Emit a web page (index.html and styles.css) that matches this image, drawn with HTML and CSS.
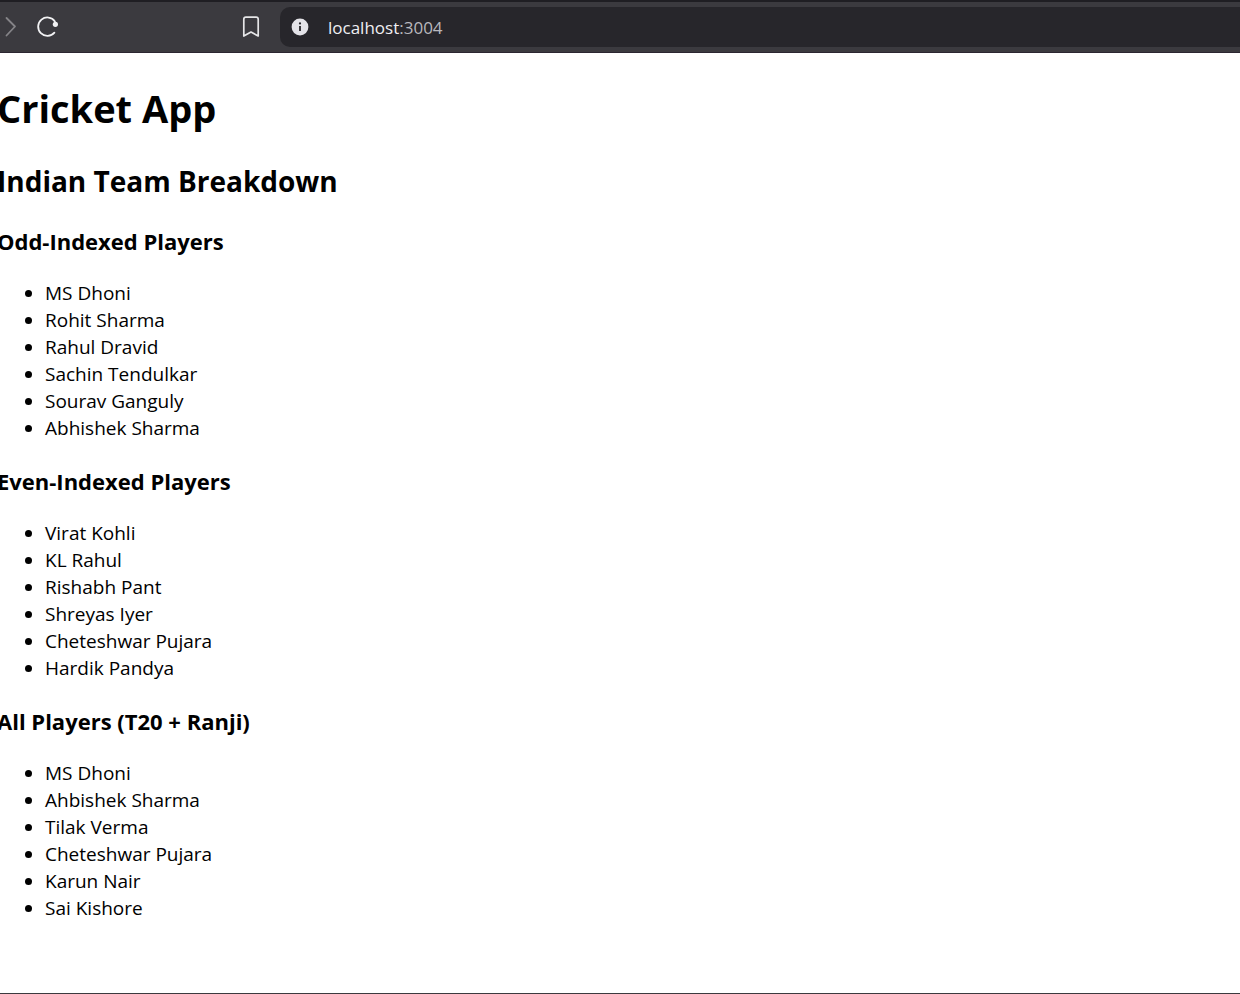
FILE: index.html
```
<!DOCTYPE html>
<html lang="en">
<head>
<meta charset="utf-8">
<title>Cricket App</title>
<link rel="stylesheet" href="styles.css">
</head>
<body>
<header class="toolbar">
  <button class="icon-button forward" type="button" aria-label="Forward">
    <svg width="12" height="22" viewBox="0 0 12 22" fill="none" stroke="#858488" stroke-width="1.8" stroke-linecap="round" stroke-linejoin="round"><path d="M1.5 2 10 10.5 1.5 19.5"/></svg>
  </button>
  <button class="icon-button reload" type="button" aria-label="Reload">
    <svg width="24" height="24" viewBox="0 0 24 24" fill="none" stroke="#f2f2f4" stroke-width="1.8" stroke-linecap="round"><path d="M18.9 6.4A9.2 9.2 0 1 0 18.4 17.6"/><circle cx="19.4" cy="9.3" r="2.6" fill="#f2f2f4" stroke="none"/></svg>
  </button>
  <button class="icon-button bookmark" type="button" aria-label="Bookmark">
    <svg width="18" height="22" viewBox="0 0 18 22" fill="none" stroke="#e6e6e8" stroke-width="1.7" stroke-linejoin="round"><path d="M1.8 20V3.3Q1.8 1.2 3.9 1.2H14.1Q16.2 1.2 16.2 3.3V20L9 16Z"/></svg>
  </button>
  <div class="address">
    <button class="icon-button" type="button" aria-label="Site information">
      <svg width="18" height="18" viewBox="0 0 18 18"><circle cx="9" cy="9" r="8.4" fill="#e4e3e8"/><path d="M9 8V13" stroke="#27262b" stroke-width="1.8"/><circle cx="9" cy="5.4" r="1.1" fill="#27262b"/></svg>
    </button>
    <a class="url" href="#"><span class="host">localhost</span>:3004</a>
  </div>
</header>
<main class="page">
  <h1>Cricket App</h1>
  <h2>Indian Team Breakdown</h2>
  <h3>Odd-Indexed Players</h3>
  <ul>
    <li>MS Dhoni</li>
    <li>Rohit Sharma</li>
    <li>Rahul Dravid</li>
    <li>Sachin Tendulkar</li>
    <li>Sourav Ganguly</li>
    <li>Abhishek Sharma</li>
  </ul>
  <h3>Even-Indexed Players</h3>
  <ul>
    <li>Virat Kohli</li>
    <li>KL Rahul</li>
    <li>Rishabh Pant</li>
    <li>Shreyas Iyer</li>
    <li>Cheteshwar Pujara</li>
    <li>Hardik Pandya</li>
  </ul>
  <h3>All Players (T20 + Ranji)</h3>
  <ul>
    <li>MS Dhoni</li>
    <li>Ahbishek Sharma</li>
    <li>Tilak Verma</li>
    <li>Cheteshwar Pujara</li>
    <li>Karun Nair</li>
    <li>Sai Kishore</li>
  </ul>
</main>
</body>
</html>
```
FILE: styles.css
```
* {
  box-sizing: border-box;
}

body {
  margin: 0;
  min-height: 100vh;
  display: flex;
  flex-direction: column;
  overflow-x: hidden;
  border-bottom: 1px solid #3b3a3f;
  background: #fff;
  color: #000;
  font-family: "Segoe UI", "Open Sans", "Noto Sans", sans-serif;
  font-size: 19px;
  line-height: 27px;
}

.toolbar {
  display: flex;
  align-items: center;
  padding: 5px 0;
  border-top: 2px solid #1f1e23;
  border-bottom: 1px solid #2b2631;
  background: #3b3a3f;
}

.icon-button {
  display: flex;
  padding: 0;
  border: 0;
  background: none;
}

.forward {
  margin-left: 5px;
}

.reload {
  margin-left: 19px;
}

.bookmark {
  margin-left: 182px;
}

.address {
  flex: 1;
  display: flex;
  align-items: center;
  gap: 19px;
  height: 40px;
  margin-left: 20px;
  padding-left: 11px;
  border-radius: 10px 0 0 10px;
  background: #27262b;
}

.url {
  color: #b9b8bd;
  font-size: 17px;
  text-decoration: none;
}

.host {
  color: #f0eff3;
}

.page {
  flex: 1;
  margin-left: -3px;
  padding: 28px 0 48px;
}

h1,
h2,
h3,
ul {
  margin: 0;
}

h1 {
  margin-bottom: 26px;
  font-size: 38px;
  line-height: 54px;
}

h2 {
  margin-bottom: 24px;
  font-size: 28px;
  line-height: 40px;
}

h3 {
  margin-bottom: 23px;
  font-size: 22px;
  line-height: 32px;
}

ul {
  margin-bottom: 23px;
  padding-left: 48px;
}
```
